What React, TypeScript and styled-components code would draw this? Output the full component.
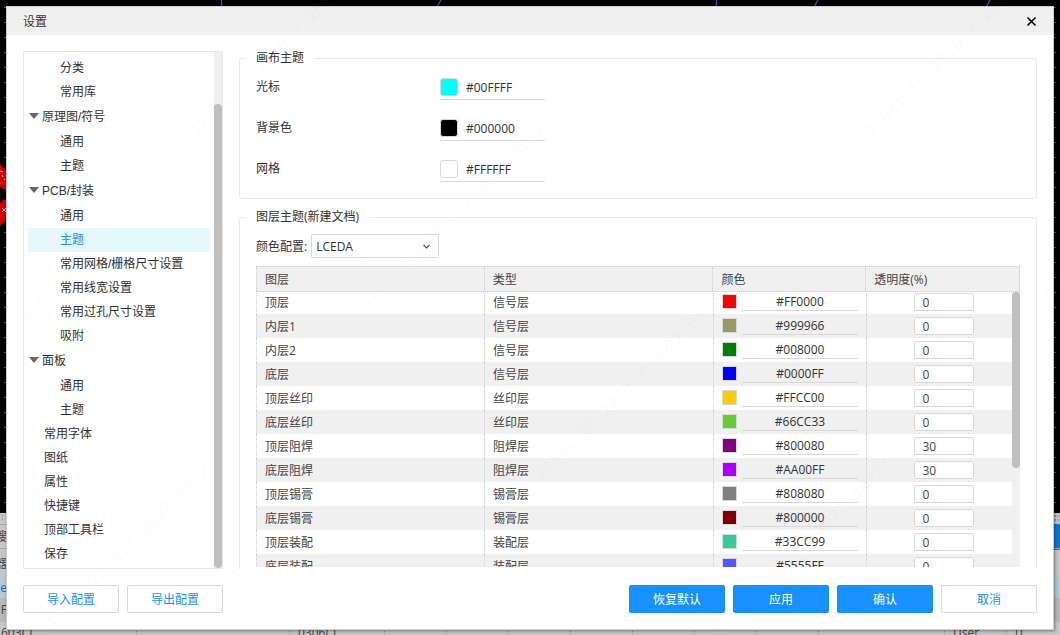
import React from "react";
import styled, { createGlobalStyle, css } from "styled-components";

const line = "#d9d9d9";
const frame = "#e8e8e8";
const stripe = "#f0f0f0";
const blue = "#1890ff";
const textFont = `"Open Sans", "Noto Sans CJK SC", sans-serif`;
const treeFont = `"Liberation Sans", "Noto Sans CJK SC", sans-serif`;

const GlobalStyle = createGlobalStyle`
  *, *::before, *::after { box-sizing: border-box; }
  body { margin: 0; background: #000; }
  button, input, select { font: inherit; color: inherit; }
`;

const Screen = styled.div`
  position: relative;
  display: flex;
  height: 100vh;
  padding: 6px 6px 5px;
  overflow: hidden;
  font: 12px/18px ${textFont};
  color: #333;
`;

/* ---- editor window behind the dialog ---- */

const Editor = styled.div`
  position: absolute;
  inset: 0;
  display: flex;
  flex-direction: column;
  background: #000;
`;

const Canvas = styled.svg`
  display: block;
  flex: 1;
  width: 100%;
  min-height: 0;
`;

const BottomPanel = styled.div`
  display: flex;
  flex-direction: column;
  height: 122px;
  background: #c6c6c6;
  color: #444;
  overflow: hidden;
`;

const PanelRow = styled.div<{ $height: number; $bg?: string; $ink?: string; $ruled?: boolean }>`
  display: flex;
  flex: none;
  align-items: center;
  justify-content: space-between;
  height: ${(p) => p.$height}px;
  background: ${(p) => p.$bg ?? "transparent"};
  color: ${(p) => p.$ink ?? "inherit"};
  ${(p) => p.$ruled && css`border-top: 1px solid #a4a4a4;`}
`;

const EdgeText = styled.span`
  display: flex;
  justify-content: flex-end;
  width: 7px;
  overflow: hidden;
  white-space: nowrap;
`;

const EdgeButton = styled.span`
  width: 8px;
  height: 26px;
  background: #1672cc;
`;

const PartsRow = styled.div`
  display: grid;
  grid-template-columns: 136px 153px 95px repeat(7, 62px) 1fr 62px 54px;
  flex: none;
  height: 18px;
  font-size: 12px;
  line-height: 14px;
`;

const PartsCell = styled.span`
  padding-left: 8px;
  border-left: 1px dotted #8c8c8c;
  white-space: nowrap;

  &:first-child {
    padding-left: 1px;
    border-left: 0;
  }
`;

/* ---- dialog ---- */

const Dialog = styled.section`
  position: relative;
  display: flex;
  flex: 1;
  flex-direction: column;
  min-width: 0;
  border: 1px solid #ccc;
  background: #fff;
  box-shadow: 1px 1px 3px rgba(0, 0, 0, 0.4);
`;

const TitleBar = styled.header`
  display: flex;
  flex: none;
  align-items: center;
  justify-content: space-between;
  height: 28px;
  padding: 0 16px;
  background: ${stripe};
`;

const Title = styled.h1`
  margin: 0;
  padding-top: 2px;
  font-size: 12px;
  font-weight: 400;
`;

const CloseButton = styled.button`
  display: flex;
  padding: 0;
  border: 0;
  background: none;
`;

const Body = styled.div`
  display: flex;
  flex: 1;
  gap: 16px;
  min-height: 0;
  padding: 14px 16px 0;
`;

const Sidebar = styled.nav`
  display: flex;
  flex: none;
  width: 200px;
  margin-top: 2px;
  border: 1px solid ${frame};
  overflow: hidden;
  font-family: ${treeFont};
`;

const Tree = styled.ul`
  flex: 1;
  margin: 0;
  padding: 4px;
  list-style: none;
`;

const TreeItem = styled.button<{ $level: number; $active?: boolean }>`
  display: flex;
  align-items: center;
  width: 100%;
  height: ${(p) => (p.$level === 0 ? 26 : 24)}px;
  padding: 0 0 1px ${(p) => [1, 16, 32][p.$level]}px;
  border: 0;
  background: ${(p) => (p.$active ? "#e6f7ff" : "transparent")};
  color: ${(p) => (p.$active ? blue : "#333")};
  text-align: left;
  white-space: nowrap;
`;

const Caret = styled.svg`
  flex: none;
  margin: 0 3px 2px 0;
`;

const Track = styled.div`
  flex: none;
  width: 8px;
  background: ${stripe};
`;

const SideTrack = styled(Track)`
  display: flex;
  align-items: flex-end;
`;

const Thumb = styled.div<{ $size: string }>`
  width: 8px;
  height: ${(p) => p.$size};
  border-radius: 4px;
  background: #bfbfbf;
`;

const Content = styled.main`
  display: flex;
  flex: 1;
  flex-direction: column;
  gap: 9px;
  min-width: 0;
  overflow: hidden;
`;

const Group = styled.fieldset`
  flex: none;
  min-width: 0;
  margin: 0;
  padding: 9px 6px 16px;
  border: 1px solid ${frame};
  border-radius: 3px;
`;

const LayerGroup = styled(Group)`
  display: flex;
  flex: 1;
  flex-direction: column;
  min-height: 0;
  padding: 8px 6px 2px;
  border-bottom: 0;
  border-radius: 3px 3px 0 0;
`;

const Legend = styled.legend`
  height: 18px;
  padding: 0 10px;
`;

const ColorList = styled.div`
  display: grid;
  gap: 17px;
  padding: 0 10px;
`;

const ColorRow = styled.div`
  display: grid;
  grid-template-columns: 184px 105px;
  height: 24px;
  line-height: 22px;
`;

const ColorField = styled.div`
  display: flex;
  align-items: flex-start;
  gap: 8px;
  padding-top: 2px;
  border-bottom: 1px solid ${line};
`;

const Swatch = styled.button<{ $color: string; $small?: boolean }>`
  flex: none;
  width: ${(p) => (p.$small ? 15 : 18)}px;
  height: ${(p) => (p.$small ? 15 : 18)}px;
  padding: 0;
  border: 1px solid ${line};
  border-radius: ${(p) => (p.$small ? 0 : 3)}px;
  background: ${(p) => p.$color};
`;

const HexInput = styled.input`
  width: 100%;
  min-width: 0;
  height: 20px;
  padding: 0;
  border: 0;
  background: transparent;
  outline: 0;
`;

const ConfigRow = styled.div`
  display: flex;
  flex: none;
  align-items: center;
  gap: 4px;
  padding: 0 10px;

  label {
    padding-top: 2px;
  }
`;

const SelectBox = styled.div`
  position: relative;
  width: 128px;

  svg {
    position: absolute;
    top: 10px;
    right: 9px;
    pointer-events: none;
  }
`;

const Select = styled.select`
  display: block;
  width: 100%;
  height: 24px;
  padding: 1px 4px 0;
  border: 1px solid ${line};
  border-radius: 2px;
  background: #fff;
  appearance: none;
`;

const TableFrame = styled.div`
  position: relative;
  flex: 1;
  min-height: 0;
  margin: 8px 10px 0;
  overflow: hidden;
`;

const Table = styled.table`
  display: block;
  color: #444;
`;

const Head = styled.thead`
  position: relative;
  z-index: 1;
  display: block;
  border: 1px dotted #ccc;
  border-left: 0;
  background: ${stripe};
`;

const Rows = styled.tbody`
  display: block;
  margin-top: -2px;
`;

const Row = styled.tr`
  display: grid;
  grid-template-columns: 228fr 229fr 153fr 154fr;
  height: 24px;

  tbody &:nth-child(even) {
    background: ${stripe};
  }
`;

const cell = css`
  display: flex;
  align-items: center;
  min-width: 0;
  padding: 2px 8px 0;
  border-left: 1px dotted #ccc;
  font-weight: 400;
  text-align: left;
`;

const HeadCell = styled.th`
  ${cell}
`;

const Cell = styled.td`
  ${cell}
`;

const ColorCell = styled(Cell)`
  align-items: flex-start;
  gap: 5px;
  padding-top: 4px;
`;

const OpacityCell = styled(Cell)`
  justify-content: center;
  padding-top: 0;
`;

const LayerHex = styled(HexInput)`
  height: 17px;
  padding-bottom: 1px;
  border-bottom: 1px solid ${line};
  color: #333;
  text-align: center;
`;

const OpacityInput = styled.input`
  width: 60px;
  height: 18px;
  padding: 1px 8px 0;
  border: 1px solid ${line};
  border-radius: 2px;
  background: #fff;
  outline: 0;
`;

const TableTrack = styled(Track)`
  position: absolute;
  top: 26px;
  right: 0;
  bottom: 0;
`;

const Footer = styled.footer`
  display: flex;
  flex: none;
  gap: 8px;
  padding: 16px;
`;

const Button = styled.button<{ $primary?: boolean; $push?: boolean }>`
  width: 96px;
  height: 28px;
  padding: 2px 0 0;
  margin-left: ${(p) => (p.$push ? "auto" : 0)};
  border: 1px solid ${(p) => (p.$primary ? blue : line)};
  border-radius: 2px;
  background: ${(p) => (p.$primary ? blue : "#fff")};
  color: ${(p) => (p.$primary ? "#fff" : blue)};
`;

const Stamps = styled.svg`
  position: absolute;
  inset: 0;
  width: 100%;
  height: 100%;
  pointer-events: none;
`;

const treeItems: { label: string; level: number; active?: boolean }[] = [
  { label: "分类", level: 2 },
  { label: "常用库", level: 2 },
  { label: "原理图/符号", level: 0 },
  { label: "通用", level: 2 },
  { label: "主题", level: 2 },
  { label: "PCB/封装", level: 0 },
  { label: "通用", level: 2 },
  { label: "主题", level: 2, active: true },
  { label: "常用网格/栅格尺寸设置", level: 2 },
  { label: "常用线宽设置", level: 2 },
  { label: "常用过孔尺寸设置", level: 2 },
  { label: "吸附", level: 2 },
  { label: "面板", level: 0 },
  { label: "通用", level: 2 },
  { label: "主题", level: 2 },
  { label: "常用字体", level: 1 },
  { label: "图纸", level: 1 },
  { label: "属性", level: 1 },
  { label: "快捷键", level: 1 },
  { label: "顶部工具栏", level: 1 },
  { label: "保存", level: 1 },
];

const canvasColors = [
  { id: "cursor", label: "光标", value: "#00FFFF" },
  { id: "background", label: "背景色", value: "#000000" },
  { id: "grid", label: "网格", value: "#FFFFFF" },
];

const layers = [
  { name: "顶层", type: "信号层", color: "#FF0000", opacity: 0 },
  { name: "内层1", type: "信号层", color: "#999966", opacity: 0 },
  { name: "内层2", type: "信号层", color: "#008000", opacity: 0 },
  { name: "底层", type: "信号层", color: "#0000FF", opacity: 0 },
  { name: "顶层丝印", type: "丝印层", color: "#FFCC00", opacity: 0 },
  { name: "底层丝印", type: "丝印层", color: "#66CC33", opacity: 0 },
  { name: "顶层阻焊", type: "阻焊层", color: "#800080", opacity: 30 },
  { name: "底层阻焊", type: "阻焊层", color: "#AA00FF", opacity: 30 },
  { name: "顶层锡膏", type: "锡膏层", color: "#808080", opacity: 0 },
  { name: "底层锡膏", type: "锡膏层", color: "#800000", opacity: 0 },
  { name: "顶层装配", type: "装配层", color: "#33CC99", opacity: 0 },
  { name: "底层装配", type: "装配层", color: "#5555FF", opacity: 0 },
];

const stampPoints = [
  [196, 138], [871, 138],
  [366, 310], [1041, 310],
  [-134, 482], [541, 482],
  [30, 652], [705, 652],
];

function EditorBackdrop() {
  return (
    <Editor aria-hidden="true">
      <Canvas>
        <defs>
          <pattern id="dots" x="4" y="7" width="15" height="15" patternUnits="userSpaceOnUse">
            <rect width="2" height="1" fill="#555" />
          </pattern>
        </defs>
        <rect width="100%" height="100%" fill="url(#dots)" />
        <g stroke="#4a48c8" strokeWidth="1.3" fill="none">
          <path d="M221.500 0V6M716.500 0V6M441 0L437 7M818 0L814 7M990 0L986 7" />
        </g>
        <path d="M0 164L6 170V190L3 189L0 186Z" fill="#d20000" />
        <path d="M0 203L3 200H6V220L0 226Z" fill="#d20000" />
        <path d="M0 171l3 1M2 175l1 2M4 179l1 1M2 208l4 4M6 208l-4 4" stroke="#ffb0b0" />
      </Canvas>
      <BottomPanel>
        <PanelRow $height={11}>
          <svg width="6" height="11">
            <path d="M2 3h1M2 6h1" stroke="#777" />
          </svg>
          <svg width="6" height="11">
            <path d="M0 3h2M4 3h2M0 7h2M4 7h2" stroke="#777" />
          </svg>
        </PanelRow>
        <PanelRow $height={24} $ruled>
          <EdgeText>搜</EdgeText>
          <EdgeButton />
        </PanelRow>
        <PanelRow $height={30} $ruled>
          <EdgeText>器</EdgeText>
        </PanelRow>
        <PanelRow $height={20} $bg="#b4cad4" $ink="#1464d2">
          <EdgeText>e</EdgeText>
        </PanelRow>
        <PanelRow $height={24} $bg="#b8b8b8">
          <EdgeText>F</EdgeText>
        </PanelRow>
        <PanelRow $height={4} />
        <PartsRow>
          <PartsCell>603CI</PartsCell>
          <PartsCell />
          <PartsCell>0306CI</PartsCell>
          <PartsCell />
          <PartsCell />
          <PartsCell />
          <PartsCell />
          <PartsCell />
          <PartsCell />
          <PartsCell />
          <PartsCell />
          <PartsCell>User</PartsCell>
          <PartsCell>[]</PartsCell>
        </PartsRow>
      </BottomPanel>
    </Editor>
  );
}

function SettingsTree() {
  return (
    <Sidebar aria-label="设置">
      <Tree>
        {treeItems.map((item, i) => (
          <li key={i}>
            <TreeItem type="button" $level={item.level} $active={item.active}>
              {item.level === 0 && (
                <Caret width="10" height="6" viewBox="0 0 10 6">
                  <path d="M0 0H10L5 6Z" fill="#666" />
                </Caret>
              )}
              {item.label}
            </TreeItem>
          </li>
        ))}
      </Tree>
      <SideTrack>
        <Thumb $size="90%" />
      </SideTrack>
    </Sidebar>
  );
}

function LayerTable() {
  return (
    <TableFrame>
      <Table>
        <Head>
          <Row>
            <HeadCell scope="col">图层</HeadCell>
            <HeadCell scope="col">类型</HeadCell>
            <HeadCell scope="col">颜色</HeadCell>
            <HeadCell scope="col">透明度(%)</HeadCell>
          </Row>
        </Head>
        <Rows>
          {layers.map((layer) => (
            <Row key={layer.name}>
              <Cell>{layer.name}</Cell>
              <Cell>{layer.type}</Cell>
              <ColorCell>
                <Swatch type="button" $small $color={layer.color} aria-label={layer.name} />
                <LayerHex defaultValue={layer.color} aria-label={`${layer.name} 颜色`} />
              </ColorCell>
              <OpacityCell>
                <OpacityInput defaultValue={layer.opacity} aria-label={`${layer.name} 透明度`} />
              </OpacityCell>
            </Row>
          ))}
        </Rows>
      </Table>
      <TableTrack>
        <Thumb $size="64%" />
      </TableTrack>
    </TableFrame>
  );
}

export default function App() {
  return (
    <Screen>
      <GlobalStyle />
      <EditorBackdrop />
      <Dialog role="dialog" aria-labelledby="dialog-title">
        <TitleBar>
          <Title id="dialog-title">设置</Title>
          <CloseButton type="button" aria-label="关闭">
            <svg width="11" height="11" viewBox="0 0 11 11">
              <path d="M1.500 1.500L9.500 9.500M9.500 1.500L1.500 9.500" stroke="#000" strokeWidth="1.700" />
            </svg>
          </CloseButton>
        </TitleBar>
        <Body>
          <SettingsTree />
          <Content>
            <Group>
              <Legend>画布主题</Legend>
              <ColorList>
                {canvasColors.map((c) => (
                  <ColorRow key={c.id}>
                    <label htmlFor={c.id}>{c.label}</label>
                    <ColorField>
                      <Swatch type="button" $color={c.value} aria-label={c.label} />
                      <HexInput id={c.id} defaultValue={c.value} />
                    </ColorField>
                  </ColorRow>
                ))}
              </ColorList>
            </Group>
            <LayerGroup>
              <Legend>图层主题(新建文档)</Legend>
              <ConfigRow>
                <label htmlFor="scheme">颜色配置:</label>
                <SelectBox>
                  <Select id="scheme" defaultValue="LCEDA">
                    <option>LCEDA</option>
                  </Select>
                  <svg width="7" height="5" viewBox="0 0 7 5">
                    <path d="M0.500 0.800L3.500 3.800L6.500 0.800" fill="none" stroke="#444" strokeWidth="1.200" />
                  </svg>
                </SelectBox>
              </ConfigRow>
              <LayerTable />
            </LayerGroup>
          </Content>
        </Body>
        <Footer>
          <Button type="button">导入配置</Button>
          <Button type="button">导出配置</Button>
          <Button type="button" $primary $push>恢复默认</Button>
          <Button type="button" $primary>应用</Button>
          <Button type="button" $primary>确认</Button>
          <Button type="button">取消</Button>
        </Footer>
      </Dialog>
      <Stamps aria-hidden="true">
        <g fill="#808080" fillOpacity="0.05" fontFamily="'Liberation Mono', monospace" fontSize="17">
          {stampPoints.map(([x, y]) => (
            <text key={`${x},${y}`} transform={`translate(${x} ${y}) rotate(-45)`}>
              J7641 10.22.0.7 2022-08-27
            </text>
          ))}
        </g>
      </Stamps>
    </Screen>
  );
}
